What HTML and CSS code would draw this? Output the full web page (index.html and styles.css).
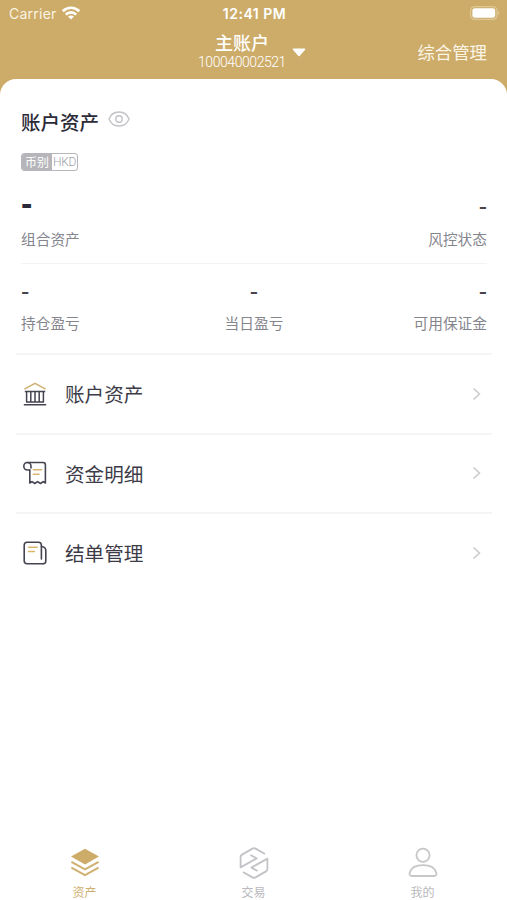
FILE: index.html
```
<!DOCTYPE html>
<html lang="zh-CN">
<head>
    <meta charset="UTF-8">
    <meta name="viewport" content="width=device-width, initial-scale=1.0">
    <title>账户资产</title>
    <link rel="stylesheet" href="styles.css">
</head>
<body>
    <div class="header">
        <div class="status-bar">
            <div class="carrier">
                <span>Carrier</span>
                <svg width="18" height="14" viewBox="0 0 18 14" fill="none" stroke="#fff" stroke-width="2.7">
                    <path d="M0.8 5.2C5.5 0.6 12.5 0.6 17.2 5.2"/>
                    <path d="M3.8 8.6C6.7 5.7 11.3 5.7 14.2 8.6"/>
                    <path d="M9 13.6L6 10.6C7.7 9 10.3 9 12 10.6Z" fill="#fff" stroke="none"/>
                </svg>
            </div>
            <div class="time">12:41 PM</div>
            <div class="battery">
                <svg width="30" height="14" viewBox="0 0 30 14">
                    <rect x="0.6" y="0.6" width="26.4" height="12.8" rx="4" fill="none" stroke="#dfc896" stroke-width="1.2"/>
                    <rect x="2.4" y="2.2" width="22.8" height="9.6" rx="2.4" fill="#fff"/>
                    <path d="M28.2 4.8C29.8 5.5 29.8 8.5 28.2 9.2Z" fill="#dfc896"/>
                </svg>
            </div>
        </div>
        <div class="nav-bar">
            <div class="account">
                <div class="account-name">主账户</div>
                <div class="account-number">100040002521</div>
            </div>
            <svg class="arrow" width="14" height="9" viewBox="0 0 14 9">
                <path d="M1.5 1.2H12.5L7 7.4Z" fill="#fff" stroke="#fff" stroke-width="1.6" stroke-linejoin="round"/>
            </svg>
            <div class="manage">综合管理</div>
        </div>
    </div>

    <div class="card">
        <div class="assets">
            <div class="title">
                <h2>账户资产</h2>
                <svg width="22" height="16" viewBox="0 0 22 16" fill="none" stroke="#c3c3c8" stroke-width="1.4">
                    <path d="M1 8C4.5 -1.3 17.5 -1.3 21 8C17.5 17.3 4.5 17.3 1 8Z"/>
                    <circle cx="11" cy="8" r="3.2"/>
                </svg>
            </div>
            <div class="currency">
                <span class="currency-label">币别</span>
                <span class="currency-code">HKD</span>
            </div>
            <div class="row total">
                <div class="cell">
                    <div class="value big">-</div>
                    <div class="label">组合资产</div>
                </div>
                <div class="cell right">
                    <div class="value">-</div>
                    <div class="label">风控状态</div>
                </div>
            </div>
            <div class="row">
                <div class="cell">
                    <div class="value">-</div>
                    <div class="label">持仓盈亏</div>
                </div>
                <div class="cell center">
                    <div class="value">-</div>
                    <div class="label">当日盈亏</div>
                </div>
                <div class="cell right">
                    <div class="value">-</div>
                    <div class="label">可用保证金</div>
                </div>
            </div>
        </div>

        <div class="menu">
            <div class="menu-item">
                <svg class="icon" width="24" height="24" viewBox="0 0 24 24" fill="none" stroke="#454451" stroke-width="1.5">
                    <path d="M1.4 7.2L12 1.4L22.6 7.2" stroke="#d0b070"/>
                    <path d="M1.8 9.6H22.2M3.6 9.6V20M7.8 9.6V20M12 9.6V20M16.2 9.6V20M20.4 9.6V20M3 20H21M0.8 22.7H23.2"/>
                </svg>
                <span>账户资产</span>
                <svg class="chevron" width="9" height="14" viewBox="0 0 9 14"><path d="M1.5 1.5L7.5 7L1.5 12.5"/></svg>
            </div>
            <div class="menu-item">
                <svg class="icon" width="24" height="24" viewBox="0 0 24 24" fill="none" stroke="#454451" stroke-width="1.6" stroke-linecap="round" stroke-linejoin="round">
                    <path d="M4.4 1.5H20Q22.4 1.5 22.4 3.9V22L20.2 20.6L17.5 22.5L14.6 20.6L11.8 22.5L9 20.6L6.8 22V9"/>
                    <path d="M6.8 9H4.4A3.6 3.75 0 1 1 8 5.2V7"/>
                    <path d="M10.4 8.8H18.6M10.4 13.2H16" stroke="#d9b66c"/>
                </svg>
                <span>资金明细</span>
                <svg class="chevron" width="9" height="14" viewBox="0 0 9 14"><path d="M1.5 1.5L7.5 7L1.5 12.5"/></svg>
            </div>
            <div class="menu-item">
                <svg class="icon" width="24" height="24" viewBox="0 0 24 24" fill="none" stroke="#454451" stroke-width="1.6" stroke-linecap="round" stroke-linejoin="round">
                    <path d="M20 22.7H4.2Q1.2 22.7 1.2 19.7V4.3Q1.2 1.3 4.2 1.3H15.4Q18.4 1.3 18.4 4.3V18"/>
                    <path d="M18.4 5.5Q22.8 6 22.8 9.5V20Q22.8 22.7 20 22.7"/>
                    <path d="M5.6 6.2H14.2M5.6 10.5H11.4" stroke="#d9b66c"/>
                </svg>
                <span>结单管理</span>
                <svg class="chevron" width="9" height="14" viewBox="0 0 9 14"><path d="M1.5 1.5L7.5 7L1.5 12.5"/></svg>
            </div>
        </div>
    </div>

    <div class="tab-bar">
        <div class="tab active">
            <svg width="30" height="32" viewBox="0 0 30 32" fill="none" stroke="#d0b070" stroke-width="2">
                <path d="M15 1.8L29 9.6L15 17.4L1 9.6Z" fill="#cdac69" stroke="none"/>
                <path d="M1.4 14.8L15 22.4L28.6 14.8M1.4 20.6L15 28.2L28.6 20.6"/>
            </svg>
            <span>资产</span>
        </div>
        <div class="tab">
            <svg width="30" height="32" viewBox="0 0 30 32" fill="none" stroke="#c3c3c7" stroke-width="1.8" stroke-linejoin="round">
                <path d="M26 7L16.6 1.6Q15 0.7 13.4 1.6L3 7.6Q1.6 8.4 1.6 10V20.4L17.6 11.4L11.4 8"/>
                <path d="M4 25L13.4 30.4Q15 31.3 16.6 30.4L27 24.4Q28.4 23.6 28.4 22V11.6L12.4 20.6L18.6 24"/>
            </svg>
            <span>交易</span>
        </div>
        <div class="tab">
            <svg width="30" height="32" viewBox="0 0 30 32" fill="none" stroke="#c7c7ca" stroke-width="1.8">
                <circle cx="15" cy="8.2" r="6.6"/>
                <path d="M4 29H26Q28.9 29 28.4 26C27 20.8 21.5 18.2 15 18.2S3 20.8 1.6 26Q1.1 29 4 29Z"/>
            </svg>
            <span>我的</span>
        </div>
    </div>
</body>
</html>
```
FILE: styles.css
```
* {
    box-sizing: border-box;
}

body {
    margin: 0;
    height: 900px;
    display: flex;
    flex-direction: column;
    background-color: #cdac69;
    font-family: "Noto Sans CJK SC", sans-serif;
    color: #2b2a38;
}

svg {
    display: block;
    flex-shrink: 0;
}

.header {
    height: 79px;
    color: #fff;
}

.status-bar {
    height: 27px;
    padding: 0 7px 0 9px;
    display: grid;
    grid-template-columns: 1fr auto 1fr;
    align-items: center;
    font-family: Inter, sans-serif;
    font-size: 14px;
}

.carrier {
    display: flex;
    align-items: center;
    gap: 5px;
    color: #faf3e2;
    letter-spacing: 0.25px;
}

.carrier svg {
    margin-bottom: 2px;
}

.time {
    font-size: 14px;
    font-weight: 600;
    letter-spacing: 0.5px;
}

.battery {
    display: flex;
    justify-content: flex-end;
}

.battery svg {
    margin-bottom: 1px;
}

.nav-bar {
    height: 50px;
    padding: 0 20px 0 197px;
    display: flex;
    align-items: center;
}

.account {
    width: 90px;
    text-align: center;
}

.account-name {
    font-size: 18px;
    font-weight: 500;
    line-height: 20px;
}

.account-number {
    font-family: Roboto, sans-serif;
    font-size: 14px;
    font-weight: 300;
    line-height: 20px;
    letter-spacing: -0.44px;
    white-space: nowrap;
    color: #fff;
}

.arrow {
    margin-left: 5px;
}

.manage {
    margin-left: auto;
    padding-bottom: 2px;
    font-size: 17.4px;
    color: #fbf5e8;
}

.card {
    flex: 1;
    padding-top: 27px;
    background-color: #fff;
    border-radius: 16px 16px 0 0;
}

.assets {
    padding: 0 20px 0 21px;
}

.title {
    height: 30px;
    display: flex;
    align-items: center;
    gap: 9px;
}

.title h2 {
    margin: 0;
    padding-top: 1px;
    font-size: 19.5px;
    font-weight: 500;
    line-height: 30px;
}

.title svg {
    margin-bottom: 4px;
}

.currency {
    width: 57px;
    height: 18px;
    margin-top: 17px;
    display: flex;
    border: 1px solid #b5b5ba;
    border-radius: 3px;
    overflow: hidden;
    font-size: 12px;
    line-height: 16px;
    text-align: center;
}

.currency-label {
    width: 30px;
    background-color: #b5b5ba;
    color: #fff;
}

.currency-code {
    flex: 1;
    font-family: Roboto, sans-serif;
    font-weight: 300;
    font-size: 12px;
    line-height: 17px;
    letter-spacing: -0.3px;
    color: #a0a0a8;
}

.row {
    height: 89px;
    display: grid;
    grid-template-columns: 1fr 1fr 1fr;
    padding-top: 14px;
}

.total {
    height: 93px;
    grid-template-columns: 1fr 1fr;
    padding-top: 22px;
    border-bottom: 1px solid #f3f3f4;
}

.value {
    height: 34px;
    font-family: "Liberation Sans", sans-serif;
    font-size: 25px;
    line-height: 26px;
    color: #45444d;
}

.total .value {
    height: 35px;
}

.total .big {
    font-size: 34px;
    font-weight: bold;
    line-height: 21px;
    color: #2b2a38;
}

.label {
    font-size: 14.7px;
    line-height: 22px;
    color: #85858d;
}

.center {
    text-align: center;
}

.right {
    text-align: right;
}

.menu {
    padding: 0 15px 0 16px;
}

.menu-item {
    height: 79.5px;
    padding: 0 11px 0 7px;
    display: flex;
    align-items: center;
    border-top: 2px solid #f5f5f6;
    font-size: 19.6px;
    color: #3c3b47;
}

.menu-item span {
    margin-left: 18px;
}

.chevron {
    margin-left: auto;
    fill: none;
    stroke: #c9c9cc;
    stroke-width: 1.5;
}

.tab-bar {
    height: 55px;
    display: flex;
    background-color: #fff;
}

.tab {
    flex: 1;
    padding-top: 2px;
    display: flex;
    flex-direction: column;
    align-items: center;
    font-size: 12px;
    line-height: 18px;
    color: #b9b9bd;
}

.tab span {
    margin-top: 4px;
}

.active {
    color: #d0b070;
}
```
